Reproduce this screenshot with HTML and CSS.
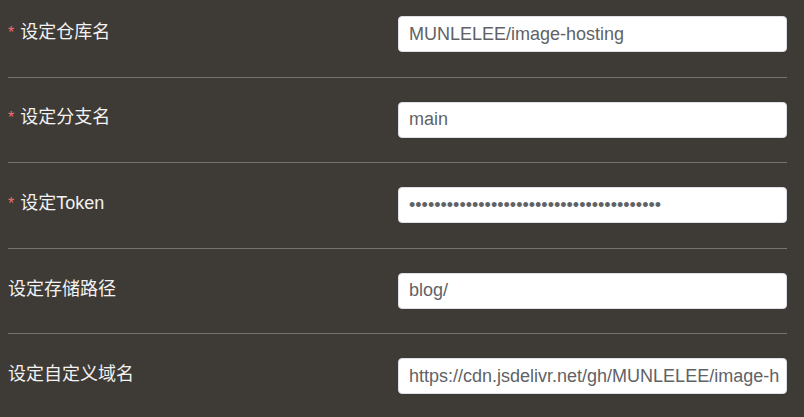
FILE: index.html
```html
<!DOCTYPE html>
<html lang="zh-CN">
<head>
<meta charset="utf-8">
<title>设置</title>
<link rel="stylesheet" href="styles.css">
</head>
<body>
<div class="form">
  <div class="row">
    <label class="label required">设定仓库名</label>
    <div class="field"><input class="input" type="text" value="MUNLELEE/image-hosting"></div>
  </div>
  <div class="row">
    <label class="label required">设定分支名</label>
    <div class="field"><input class="input" type="text" value="main"></div>
  </div>
  <div class="row">
    <label class="label required">设定Token</label>
    <div class="field"><input class="input" type="password" value="abcdefghijabcdefghijabcdefghijabcdefghij"></div>
  </div>
  <div class="row">
    <label class="label">设定存储路径</label>
    <div class="field"><input class="input" type="text" value="blog/"></div>
  </div>
  <div class="row">
    <label class="label">设定自定义域名</label>
    <div class="field"><input class="input" type="text" value="https://cdn.jsdelivr.net/gh/MUNLELEE/image-hosting"></div>
  </div>
</div>
</body>
</html>
```
FILE: styles.css
```css
html, body {
  margin: 0;
  background: #3e3a35;
}
body {
  padding: 0 17px 0 8px;
  font-family: "Liberation Sans", "Noto Sans CJK SC", sans-serif;
}
.form {
  display: flex;
  flex-direction: column;
}
.row {
  display: grid;
  grid-template-columns: 390px 1fr;
  align-items: center;
  padding: 24px 0 24.5px;
  border-bottom: 1px solid #77736e;
}
.row:first-child {
  padding-top: 16px;
}
.row:last-child {
  border-bottom: none;
}
.label {
  color: #f2f2f2;
  font-size: 18px;
  line-height: 24px;
  margin-top: -4px;
}
.required::before {
  content: "*";
  color: #f56c6c;
  margin-right: 6px;
  font-size: 16px;
}
.field {
  display: flex;
}
.input {
  box-sizing: border-box;
  width: 100%;
  height: 36px;
  padding: 0 7px 0 10px;
  border: 1px solid #dcdfe6;
  border-radius: 4px;
  background: #fff;
  color: #606266;
  font-family: "Liberation Sans", Arial, sans-serif;
  font-size: 18px;
  outline: none;
}
```
